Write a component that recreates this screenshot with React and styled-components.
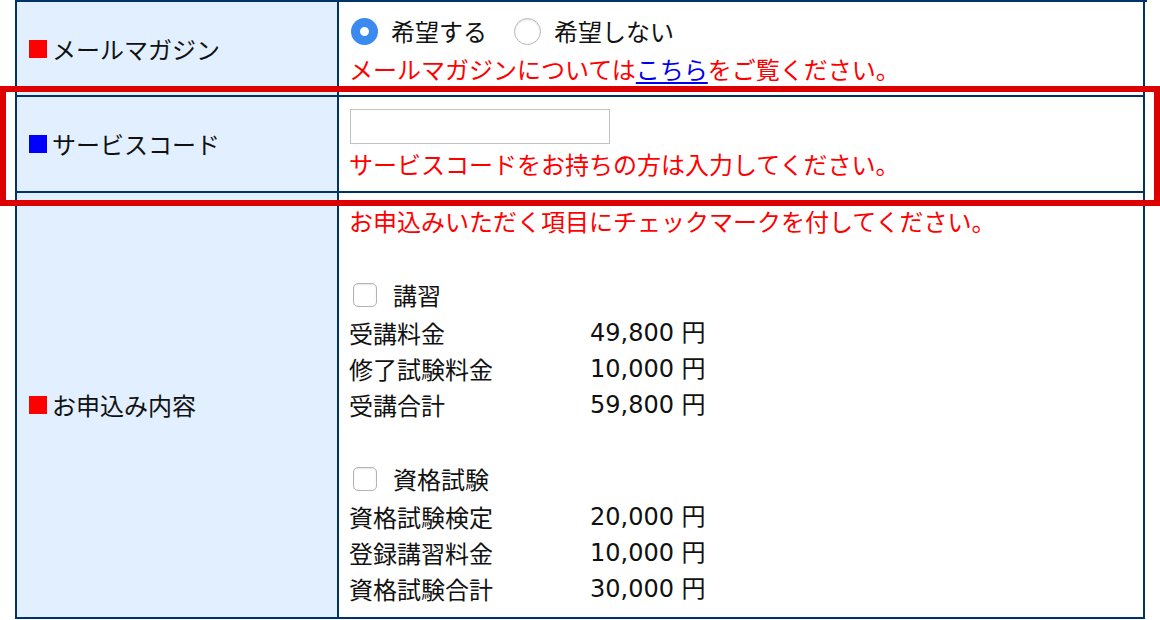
import { Fragment } from "react";
import styled, { createGlobalStyle } from "styled-components";

const GlobalStyle = createGlobalStyle`
  html, body {
    margin: 0;
    padding: 0;
    background: #ffffff;
  }
  body {
    font-family: "Noto Sans CJK JP", "Noto Sans", sans-serif;
    color: #111111;
  }
`;

const Page = styled.div`
  position: relative;
  width: 1160px;
  height: 620px;
  overflow: hidden;
`;

const FormTable = styled.div`
  display: grid;
  grid-template-columns: 322px 806px;
  width: 1130px;
  margin-left: 15px;
  border-top: 2px solid #003366;
  border-left: 2px solid #003366;
  font-size: 24px;
  line-height: 36px;
`;

const LabelCell = styled.div`
  display: flex;
  align-items: center;
  padding-left: 12px;
  background: #e1effe;
  border-right: 2px solid #003366;
  border-bottom: 2px solid #003366;
`;

const Mark = styled.span`
  display: inline-block;
  width: 18px;
  height: 18px;
  margin-right: 5px;
  background: ${(p) => p.$color};
`;

const ValueCell = styled.div`
  display: flex;
  flex-direction: column;
  padding: ${(p) => p.$pad};
  border-right: 2px solid #003366;
  border-bottom: 2px solid #003366;
`;

const RadioRow = styled.div`
  display: flex;
  align-items: center;
  height: 40px;
`;

const Radio = styled.input.attrs({ type: "radio" })`
  appearance: none;
  box-sizing: border-box;
  width: 27px;
  height: 27px;
  margin: 0 13px 0 ${(p) => p.$gap || 2}px;
  border-radius: 50%;
  border: 1px solid #b8b8b8;
  background: #ffffff;
  box-shadow: inset 0 1px 2px rgba(0, 0, 0, 0.12);
  &:checked {
    border: 9px solid #3b8af0;
    background: #ffffff;
    box-shadow: none;
  }
`;

const Note = styled.div`
  color: #ff0000;
  height: 36px;
  white-space: nowrap;
`;

const Link = styled.a`
  color: #0000ee;
  text-decoration: underline;
  text-underline-offset: 3px;
`;

const CodeInput = styled.input`
  box-sizing: border-box;
  width: 260px;
  height: 35px;
  margin: 0 0 2px 1px;
  border: 1px solid #c2c2c2;
  font-size: 20px;
  padding: 0 6px;
  outline: none;
`;

const Spacer = styled.div`
  height: 36px;
`;

const CheckRow = styled.label`
  display: flex;
  align-items: center;
  height: 40px;
`;

const Check = styled.input.attrs({ type: "checkbox" })`
  appearance: none;
  box-sizing: border-box;
  width: 24px;
  height: 24px;
  margin: 0 16px 0 4px;
  border: 1px solid #b3b3b3;
  border-radius: 5px;
  background: #ffffff;
  box-shadow: inset 0 1px 2px rgba(0, 0, 0, 0.1);
`;

const PriceList = styled.div`
  display: grid;
  grid-template-columns: 241px auto;
  grid-auto-rows: 36px;
`;

const Amount = styled.span`
  font-family: "DejaVu Sans", "Noto Sans CJK JP", sans-serif;
  white-space: nowrap;
`;

const Highlight = styled.div`
  position: absolute;
  left: 0;
  top: 86px;
  box-sizing: border-box;
  width: 1160px;
  height: 120px;
  border: 6px solid #dd0000;
  pointer-events: none;
`;

const courses = [
  {
    title: "講習",
    items: [
      ["受講料金", "49,800"],
      ["修了試験料金", "10,000"],
      ["受講合計", "59,800"],
    ],
  },
  {
    title: "資格試験",
    items: [
      ["資格試験検定", "20,000"],
      ["登録講習料金", "10,000"],
      ["資格試験合計", "30,000"],
    ],
  },
];

function CourseBlock({ title, items }) {
  return (
    <div>
      <CheckRow>
        <Check />
        {title}
      </CheckRow>
      <PriceList>
        {items.map(([name, price]) => (
          <Fragment key={name}>
            <span>{name}</span>
            <Amount>{price} 円</Amount>
          </Fragment>
        ))}
      </PriceList>
    </div>
  );
}

export default function App() {
  return (
    <Page>
      <GlobalStyle />
      <FormTable>
        <LabelCell>
          <Mark $color="#ff0000" />
          メールマガジン
        </LabelCell>
        <ValueCell $pad="9px 10px 8px">
          <RadioRow>
            <Radio name="mail" defaultChecked />
            希望する
            <Radio name="mail" $gap={27} />
            希望しない
          </RadioRow>
          <Note>
            メールマガジンについては<Link href="#">こちら</Link>をご覧ください。
          </Note>
        </ValueCell>

        <LabelCell>
          <Mark $color="#0000ff" />
          サービスコード
        </LabelCell>
        <ValueCell $pad="12px 10px 9px">
          <CodeInput type="text" />
          <Note>サービスコードをお持ちの方は入力してください。</Note>
        </ValueCell>

        <LabelCell>
          <Mark $color="#ff0000" />
          お申込み内容
        </LabelCell>
        <ValueCell $pad="10px 10px 10px">
          <Note>お申込みいただく項目にチェックマークを付してください。</Note>
          <Spacer />
          <CourseBlock {...courses[0]} />
          <Spacer />
          <CourseBlock {...courses[1]} />
        </ValueCell>
      </FormTable>
      <Highlight />
    </Page>
  );
}
